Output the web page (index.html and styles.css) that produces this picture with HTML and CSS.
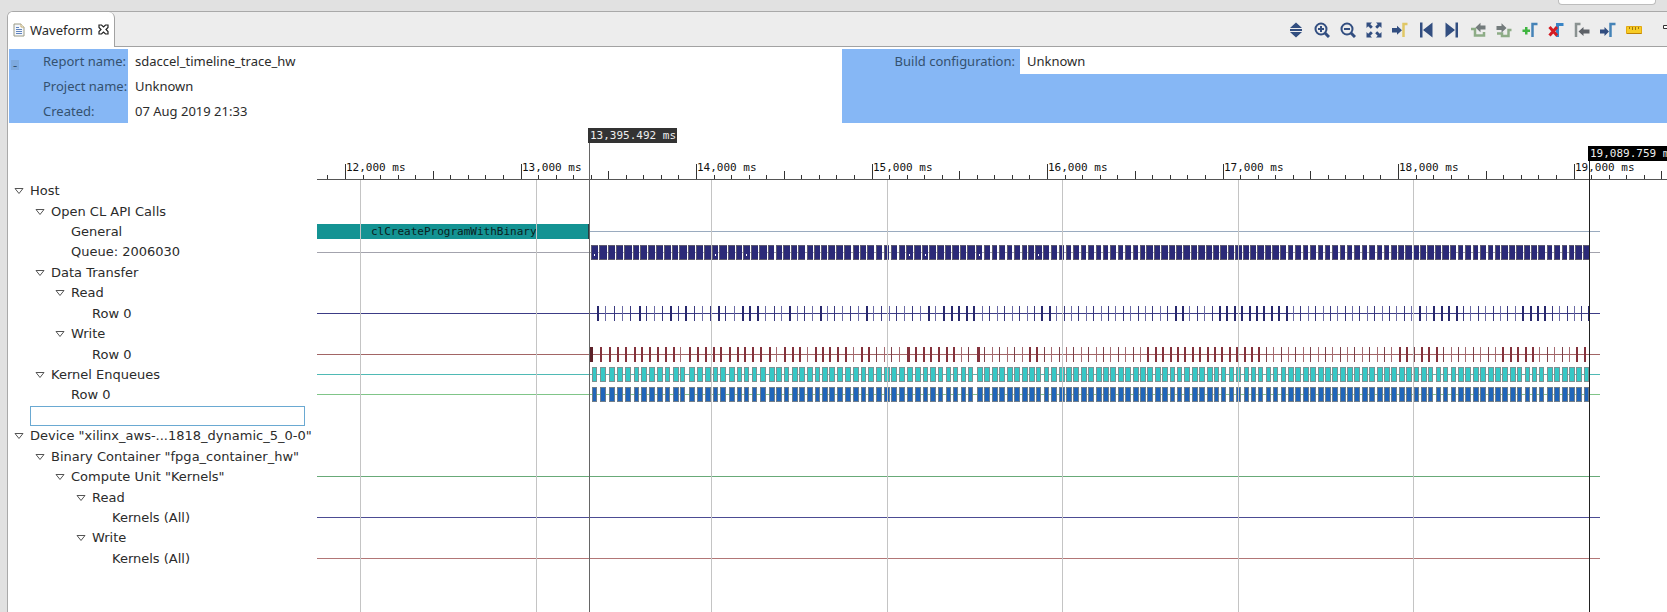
FILE: index.html
```html
<!DOCTYPE html>
<html lang="en">
<head>
<meta charset="utf-8">
<title>Waveform</title>
<link rel="stylesheet" href="styles.css">
</head>
<body>
<div class="topstrip"><span class="quick-box"></span></div>
<main class="view">
  <header class="tabbar">
    <div class="tab">
      <svg class="doc-icon" viewBox="0 0 12 14" width="12" height="14"><path d="M1 1h7l3 3v9H1z" fill="#f4f7fc" stroke="#9a9a86"/><path d="M8 1v3h3" fill="#fff" stroke="#c2ac70"/><path d="M3 4.500h3M3 6.500h6M3 8.500h6M3 10.500h6" stroke="#5f83bd"/></svg>
      <span>Waveform</span>
      <button class="close" aria-label="Close"><svg viewBox="0 0 11 11" width="11" height="11"><path d="M1 1h2.500l2 2 2-2H10v2.500l-2 2 2 2V10H7.500l-2-2-2 2H1V7.500l2-2-2-2z" fill="#fff" stroke="#222" stroke-width="1.200"/></svg></button>
    </div>
    <div class="toolbar">
      <button aria-label="Fit vertically"><svg viewBox="0 0 16 16"><path d="M8 .5 14 6H2zM2 7h12v2H2zM2 10h12L8 15.500z" fill="#324e80"/></svg></button>
      <button aria-label="Zoom in"><svg viewBox="0 0 16 16" fill="none" stroke="#324e80" stroke-width="2"><circle cx="7" cy="7" r="5.500"/><path d="m11 11 4 4" stroke-width="3"/><path d="M4 7h6M7 4v6"/></svg></button>
      <button aria-label="Zoom out"><svg viewBox="0 0 16 16" fill="none" stroke="#324e80" stroke-width="2"><circle cx="7" cy="7" r="5.500"/><path d="m11 11 4 4" stroke-width="3"/><path d="M4 7h6"/></svg></button>
      <button aria-label="Zoom fit"><svg viewBox="0 0 16 16"><path d="M.5.500h5.500L4.300 2.200 6.800 4.800 4.800 6.800 2.200 4.300.5 6zM15.500.500V6l-1.700-1.700-2.600 2.500-2-2 2.500-2.600L10 .5zM.5 15.500V10l1.700 1.700 2.600-2.500 2 2-2.500 2.600L6 15.500zM15.500 15.500H10l1.700-1.700-2.500-2.600 2-2 2.600 2.500L15.500 10z" fill="#324e80"/></svg></button>
      <button aria-label="Go to cursor"><svg viewBox="0 0 16 16"><path d="M0 6h5V3.700l5 4.500-5 4.500v-2.300H0z" fill="#324e80"/><path d="M11.500 15V2H15.500" fill="none" stroke="#e0c765" stroke-width="2.500"/></svg></button>
      <button aria-label="Previous transition"><svg viewBox="0 0 16 16"><path d="M2 .5h2.500v15H2zM14.500.500v15L5 8z" fill="#324e80"/></svg></button>
      <button aria-label="Next transition"><svg viewBox="0 0 16 16"><path d="M11.500.500H14v15h-2.500zM1.500.500 11 8l-9.500 7.500z" fill="#324e80"/></svg></button>
      <button aria-label="Previous edge"><svg viewBox="0 0 16 16"><path d="M1 7h4v6.500h9V10" fill="none" stroke="#8dac86" stroke-width="2.500"/><path d="M5.500 5.500 10.500.800V3.500H15.500v4h-5v2.700z" fill="#737b7c"/></svg></button>
      <button aria-label="Next edge"><svg viewBox="0 0 16 16"><path d="M1 11.500h5v2.500h6.500V8H15.500" fill="none" stroke="#8dac86" stroke-width="2.500"/><path d="M10.500 6 5.500 1.300v2.700H.5v4h5v2.700z" fill="#737b7c"/></svg></button>
      <button aria-label="Add marker"><svg viewBox="0 0 16 16"><path d="M3 5h2.500v2.500H8V10H5.500v2.500H3V10H.5V7.500H3z" fill="#3fb540"/><path d="M10.500 15V2H15.500" fill="none" stroke="#4583b7" stroke-width="2.500"/></svg></button>
      <button aria-label="Delete marker"><svg viewBox="0 0 16 16"><path d="M9.500 15V2.500H15.500" fill="none" stroke="#3985c6" stroke-width="3"/><path d="m1.500 5 7.500 8.500M9 5l-7.500 8.500" stroke="#d41c23" stroke-width="3"/></svg></button>
      <button aria-label="Previous marker"><svg viewBox="0 0 16 16"><path d="M2 15V2H6.500" fill="none" stroke="#8a9291" stroke-width="2.500"/><path d="m4.500 9.500 5-4.500v2.500h6v4h-6V14z" fill="#5e6268"/></svg></button>
      <button aria-label="Next marker"><svg viewBox="0 0 16 16"><path d="M0 7.500h4.500V5L9 9.500 4.500 14v-2.500H0z" fill="#324e80"/><path d="M10.500 15V2H15.500" fill="none" stroke="#4583b7" stroke-width="2.500"/></svg></button>
      <button aria-label="Ruler"><svg viewBox="0 0 16 16"><path d="M.500 4.500h15v7H.500z" fill="#f7cc25" stroke="#e3a911"/><path d="M1 11.500h14.500" stroke="#bd8208"/><path d="M3.500 5v2M6.500 5v3M9.500 5v3M12.500 5v2" stroke="#9b7616"/></svg></button>
      <button class="minimize" aria-label="Minimize"><svg viewBox="0 0 10 5" width="10" height="5"><path d="M.5.500h9v3h-9z" fill="#fff" stroke="#333"/></svg></button>
    </div>
  </header>

  <section class="report">
    <dl class="details details-left">
      <div><dt><button class="collapse" aria-label="Collapse">-</button>Report name:</dt><dd>sdaccel_timeline_trace_hw</dd></div>
      <div><dt>Project name:</dt><dd>Unknown</dd></div>
      <div><dt>Created:</dt><dd>07 Aug 2019 21:33</dd></div>
    </dl>
    <dl class="details details-right">
      <div><dt>Build configuration:</dt><dd>Unknown</dd></div>
    </dl>
  </section>

  <section class="wave">
    <ul class="tree" id="tree"></ul>
    <svg class="chart" id="chart" role="img" aria-label="Timeline trace"></svg>
  </section>
</main>
<script src="timeline.js"></script>
</body>
</html>
```
FILE: styles.css
```css
* { box-sizing: border-box; }
body {
  margin: 0;
  min-height: 100vh;
  display: flex;
  flex-direction: column;
  overflow: hidden;
  background: #e1e1e1;
  color: #2b2b2b;
  font: 13px/20px "Noto Sans", "Open Sans", sans-serif;
}
button {
  margin: 0;
  padding: 0;
  border: 0;
  background: none;
  font: inherit;
  color: inherit;
}
.topstrip {
  height: 11px;
  display: flex;
  justify-content: flex-end;
  padding-right: 11px;
}
.quick-box {
  width: 98px;
  height: 5px;
  background: #fff;
  border: 1px solid #bdbdbd;
  border-top: 0;
  border-radius: 0 0 4px 4px;
}
.view {
  flex: 1;
  display: flex;
  flex-direction: column;
  margin-left: 7px;
  background: #fff;
  border: 1px solid #a9a9a9;
  border-width: 1px 0 0 1px;
  border-top-left-radius: 6px;
  overflow: hidden;
}
.tabbar {
  height: 35px;
  display: flex;
  justify-content: space-between;
  background: linear-gradient(#a2a2a2, #a2a2a2) bottom / 100% 1px no-repeat #ededed;
}
.tab {
  display: flex;
  align-items: center;
  gap: 5px;
  padding: 0 5px;
  background: #fff;
  border-right: 1px solid #a2a2a2;
  border-top-right-radius: 6px;
}
.close, .close svg { display: block; }
.toolbar {
  display: flex;
  align-items: center;
  overflow: hidden;
}
.toolbar button {
  width: 26px;
  flex: none;
  display: flex;
  justify-content: center;
}
.toolbar svg { width: 16px; height: 16px; }
.toolbar .minimize {
  width: 20px;
  padding-left: 16px;
  margin-bottom: 4px;
  justify-content: flex-start;
}
.toolbar .minimize svg { width: 10px; height: 5px; flex: none; }

.report {
  display: grid;
  grid-template-columns: 833fr 825fr;
  padding: 2px 0 0 1px;
}
.details { margin: 0; }
.details div { display: flex; }
.details dt {
  position: relative;
  height: 25px;
  padding-top: 2px;
  background: #86b7f5;
  color: #34516f;
  white-space: nowrap;
}
.details dd {
  flex: 1;
  margin: 0;
  height: 25px;
  padding: 2px 0 0 7px;
  background: #fff;
}
.details-left div:last-child dt, .details-left div:last-child dd { height: 24px; }
.details-left dt { width: 119px; padding-left: 34px; }
.details-right { background: #86b7f5; }
.details-right dt { width: 178px; padding-right: 5px; text-align: right; }
.collapse {
  position: absolute;
  left: 2px;
  top: 11px;
  width: 8px;
  height: 10px;
  line-height: 10px;
  background: #7eaadf;
}

.wave {
  flex: 1;
  display: flex;
}
.tree {
  width: 309px;
  height: 446px;
  flex: none;
  margin: 0;
  padding: 58px 12px 0 0;
  list-style: none;
  display: grid;
  grid-template-columns: minmax(0, 1fr);
  grid-auto-rows: 1fr;
  font: 13px/20px "DejaVu Sans", sans-serif;
}
.tree li {
  display: flex;
  align-items: center;
  white-space: pre;
}
.depth0 { padding-left: 22px; }
.depth1 { padding-left: 43px; }
.depth2 { padding-left: 63px; }
.depth3 { padding-left: 84px; }
.depth4 { padding-left: 104px; }
.toggle {
  width: 16px;
  height: 10px;
  flex: none;
  margin-left: -16px;
}
.toggle svg { display: block; }
.tree .selected {
  margin-left: 22px;
  border: 1px solid #6aa9d2;
}
.chart {
  flex: 1;
  min-width: 0;
  align-self: stretch;
  font: 11px "DejaVu Sans Mono", monospace;
}
.chart rect, .chart line { shape-rendering: crispEdges; }
```
FILE: timeline.js
```js
const rows = [
  [0, 'Host', true], [1, 'Open CL API Calls', true], [2, 'General'], [2, 'Queue: 2006030'],
  [1, 'Data Transfer', true], [2, 'Read', true], [3, 'Row 0'], [2, 'Write', true], [3, 'Row 0'],
  [1, 'Kernel Enqueues', true], [2, 'Row 0'], null,
  [0, 'Device "xilinx_aws-...1818_dynamic_5_0-0"', true],
  [1, 'Binary Container "fpga_container_hw"', true],
  [2, 'Compute Unit "Kernels"', true], [3, 'Read', true], [4, 'Kernels (All)'],
  [3, 'Write', true], [4, 'Kernels (All)']
];
const arrow = '<button class="toggle" aria-label="Collapse"><svg width="10" height="10" viewBox="0 0 10 10"><path d="M1 2.500h8L5 7.500z" fill="#fff" stroke="#555"/></svg></button>';
document.getElementById('tree').innerHTML = rows.map(r =>
  r ? `<li class="depth${r[0]}">${r[2] ? arrow : ''}<span>${r[1]}</span></li>` : '<li class="selected"></li>'
).join('');

let out = '';
const rect = (x, y, w, h, fill) => { out += `<rect x="${x}" y="${y}" width="${w}" height="${h}" fill="${fill}"/>`; };
const text = (x, y, s, fill) => { out += `<text x="${x}" y="${y}" fill="${fill}">${s}</text>`; };

const END = 1283, BAR = 15;
const lane = { general: 108, queue: 129, read: 190, write: 231, enqueue: 251, kernel: 271, cu: 353, cuRead: 394, cuWrite: 435 };
const lineColor = { general: '#9aabbf', queue: '#a3a3ad', read: '#3c3c86', write: '#a26565', enqueue: '#4fbab5', kernel: '#80c588', cu: '#68aa78', cuRead: '#4c4c93', cuWrite: '#b27676' };
for (const k in lane) rect(0, lane[k], END, 1, lineColor[k]);

rect(0, lane.general - 7, 271, BAR, '#149393');
rect(271, lane.general - 7, 2, BAR, '#263b40');
text(54, lane.general + 4, 'clCreateProgramWithBinary', '#0b2020');

// Start of each enqueue in pixels from the left edge of the timeline.
const starts = [275,283,292,300,308,317,324,332,340,348,356,363,372,380,388,396,403,412,420,427,435,443,452,459,467,475,482,490,498,505,512,520,528,536,544,551,559,567,574,582,590,598,606,613,621,629,636,644,651,660,667,675,682,690,697];
for (let k = 0; k < 77; k++) starts.push(Math.round(704.7 + 7.395 * k));

const among = (i, ranges) => ranges.some(([a, b = a]) => i >= a && i <= b);
const longReads = [[0],[5],[9],[11],[15],[18,20],[24],[28],[34],[42],[44,48],[57,58],[75,76],[81,90],[108],[110,113],[122,125],[131]];
const longWrites = [[0,10],[12,22],[24,26],[28,32],[34,35],[40,46],[49],[56,57],[72,87],[106,107],[109,111],[120,124],[130,131]];
const waits = [[0],[15],[19],[40],[42],[49],[57]];

starts.forEach((x, i) => {
  const longRead = among(i, longReads), longWrite = among(i, longWrites);
  const wide = longRead || longWrite;
  const next = i + 1 < starts.length ? starts[i + 1] : x + 7;
  const qx = wide ? x - 1 : x;
  const qw = next - 2 - qx;
  rect(qx, lane.queue - 7, qw, BAR, '#5d5a70');
  rect(qx + 1, lane.queue - 6, qw - 1, BAR - 2, '#2b2a78');
  if (among(i, waits)) rect(x + 2, lane.queue + 2, 1, 2, '#fff');
  rect(i === 131 ? x + 4 : x + 5, lane.read - 7, longRead ? 2 : 1, BAR, longRead ? '#29296e' : i % 2 ? '#6a6aa5' : '#39397f');
  if (i === 0) rect(x - 3, lane.write - 7, 4, BAR, '#5c2028');
  else rect(x, lane.write - 7, i === 40 || i === 49 ? 3 : longWrite ? 2 : 1, BAR, longWrite ? '#84323c' : i % 2 ? '#a46a70' : '#7d4149');
  const w = longRead ? 5 : 6;
  rect(x, lane.enqueue - 7, w, BAR, '#7c9292');
  rect(x + 1, lane.enqueue - 6, w - 2, BAR - 2, '#36c8c6');
  rect(x, lane.kernel - 7, w, BAR, '#6f7d8a');
  rect(x + 1, lane.kernel - 6, w - 2, BAR - 2, '#2066ba');
});

// Time axis.
const PITCH = 175.5, ORIGIN = 28;
rect(0, 56, '100%', 1, '#555');
for (let n = -1; n < 76; n++) {
  const x = Math.round(ORIGIN + n * PITCH / 10);
  const h = n % 10 === 0 ? 15 : n % 5 === 0 ? 8 : 4;
  rect(x, 56 - h, 1, h, '#333');
  if (h === 15) {
    text(x + 1, 48, `${12 + n / 10},000 ms`, '#111');
    if (n < 70) out += `<line x1="${x + 15.500}" x2="${x + 15.500}" y1="57" y2="100%" stroke="#c4c4c4"/>`;
  }
}

const marker = (x, top, label, w, bg, color) => {
  out += `<line x1="${x + .5}" x2="${x + .5}" y1="${top}" y2="100%" stroke="${color}"/>`;
  rect(x - 1, top, w, 15, bg);
  text(x + 1, top + 11, label, '#eee');
};
marker(272, 5, '13,395.492 ms', 89, '#333', '#666');
marker(1272, 23, '19,089.759 ms', 89, '#000', '#222');
document.getElementById('chart').innerHTML = out;
```
